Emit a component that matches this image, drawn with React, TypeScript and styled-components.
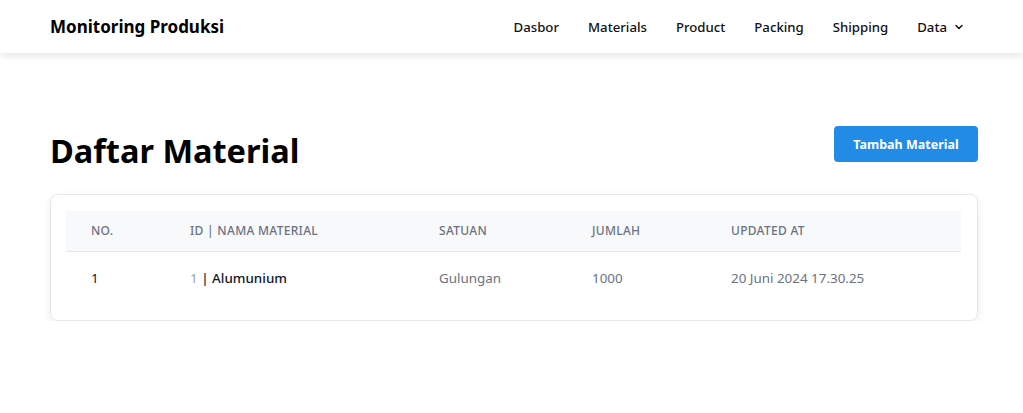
import React from "react";
import styled, { createGlobalStyle } from "styled-components";

const Global = createGlobalStyle`
  html, body { margin: 0; padding: 0; background: #ffffff; }
  body { font-family: "Noto Sans", "Open Sans", sans-serif; color: #111827; }
  * { box-sizing: border-box; }
`;

const NavBar = styled.header`
  height: 53px;
  background: #fff;
  box-shadow: 0 2px 8px rgba(0, 0, 0, 0.12);
  display: flex;
  align-items: center;
  justify-content: space-between;
  padding: 0 58px 0 50px;
  position: relative;
`;

const Brand = styled.div`
  font-size: 17px;
  font-weight: 700;
  color: #000;
`;

const NavLinks = styled.nav`
  display: flex;
  align-items: center;
  gap: 29px;
`;

const NavLink = styled.a`
  font-size: 13.2px;
  font-weight: 500;
  color: #111;
  text-decoration: none;
  display: flex;
  align-items: center;
  gap: 6px;
`;

const Main = styled.main`
  padding: 72px 45px 0 50px;
`;

const HeadRow = styled.div`
  display: flex;
  align-items: center;
  justify-content: space-between;
  margin-bottom: 19px;
`;

const Title = styled.h1`
  margin: 0;
  font-size: 32.5px;
  font-weight: 700;
  color: #000;
  line-height: 48px;
  margin-top: 2px;
`;

const Button = styled.button`
  background: #228be6;
  color: #fff;
  border: none;
  border-radius: 4px;
  height: 36px;
  width: 144px;
  font-family: inherit;
  font-size: 12.5px;
  font-weight: 700;
  margin-top: -12px;
`;

const Card = styled.div`
  border: 1px solid #e5e7eb;
  border-radius: 8px;
  box-shadow: 0 3px 8px rgba(0, 0, 0, 0.08);
  padding: 16px 16px 15px 15px;
`;

const Table = styled.table`
  width: 100%;
  border-collapse: collapse;
  table-layout: fixed;
`;

const Th = styled.th`
  background: #f8f9fa;
  height: 40px;
  text-align: left;
  font-size: 12px;
  font-weight: 500;
  letter-spacing: 0.3px;
  color: #6b7280;
  text-transform: uppercase;
  padding: 0 0 0 25px;
  border-bottom: 1px solid #e5e7eb;
`;

const Td = styled.td<{ $tone?: "dark" | "muted" }>`
  height: 54px;
  font-size: 13.4px;
  padding: 0 0 0 25px;
  color: ${(p) => (p.$tone === "muted" ? "#6b7280" : "#111827")};
`;

const IdNum = styled.span`
  color: #9ca3af;
`;

const Name = styled.span`
  font-weight: 500;
  color: #111827;
`;

const Chevron = () => (
  <svg width="12" height="12" viewBox="0 0 24 24" fill="none" stroke="#111" strokeWidth="3" strokeLinecap="round" strokeLinejoin="round">
    <path d="M6 9l6 6 6-6" />
  </svg>
);

export default function App() {
  return (
    <>
      <Global />
      <NavBar>
        <Brand>Monitoring Produksi</Brand>
        <NavLinks>
          <NavLink>Dasbor</NavLink>
          <NavLink>Materials</NavLink>
          <NavLink>Product</NavLink>
          <NavLink>Packing</NavLink>
          <NavLink>Shipping</NavLink>
          <NavLink>
            Data <Chevron />
          </NavLink>
        </NavLinks>
      </NavBar>
      <Main>
        <HeadRow>
          <Title>Daftar Material</Title>
          <Button>Tambah Material</Button>
        </HeadRow>
        <Card>
          <Table>
            <colgroup>
              <col style={{ width: 99 }} />
              <col style={{ width: 249 }} />
              <col style={{ width: 153 }} />
              <col style={{ width: 139 }} />
              <col />
            </colgroup>
            <thead>
              <tr>
                <Th>No.</Th>
                <Th>ID | Nama Material</Th>
                <Th>Satuan</Th>
                <Th>Jumlah</Th>
                <Th>Updated At</Th>
              </tr>
            </thead>
            <tbody>
              <tr>
                <Td>1</Td>
                <Td>
                  <IdNum>1</IdNum> <Name>| Alumunium</Name>
                </Td>
                <Td $tone="muted">Gulungan</Td>
                <Td $tone="muted">1000</Td>
                <Td $tone="muted">20 Juni 2024 17.30.25</Td>
              </tr>
            </tbody>
          </Table>
        </Card>
      </Main>
    </>
  );
}
